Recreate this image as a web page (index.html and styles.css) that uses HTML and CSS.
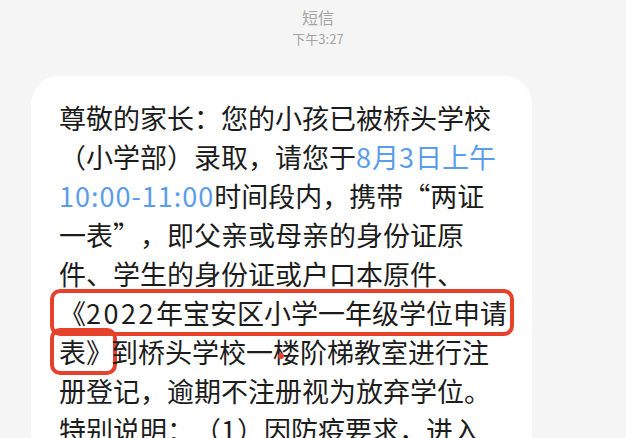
FILE: index.html
```html
<!DOCTYPE html>
<html lang="zh-CN">
<head>
<meta charset="utf-8">
<link rel="stylesheet" href="styles.css">
</head>
<body>
<div class="screen">
  <header class="thread-head">
    <div class="thread-title">短信</div>
    <div class="thread-time">下午3:27</div>
  </header>
  <div class="bubble">
    <p class="msg">尊敬的家长：您的小孩已被桥头学校<br>（小学部）录取，请您于<span class="link"><span class="num">8</span>月<span class="num">3</span>日上午<br><span class="num">10:00-11:00</span></span>时间段内，携带“两证<br>一表”，即父亲或母亲的身份证原<br>件、学生的身份证或户口本原件、<br><span class="mark mark-a">《<span class="num year">2022</span>年宝安区小学一年级学位申请</span><br><span class="mark mark-b">表》</span>到桥头学校一楼阶梯教室进行注<br>册登记，逾期不注册视为放弃学位。<br>特别说明：（<span class="num">1</span>）因防疫要求，进入</p>
    <span class="dot"></span>
  </div>
</div>
</body>
</html>
```
FILE: styles.css
```css
html, body {
  margin: 0;
  padding: 0;
}
body {
  background: #f5f5f5;
  font-family: "Noto Sans CJK SC", "Noto Sans", sans-serif;
  overflow: hidden;
}
.screen {
  width: 626px;
  height: 438px;
  overflow: hidden;
}
.thread-head {
  display: flex;
  flex-direction: column;
  align-items: center;
  padding: 6px 0 0 10px;
  color: #a4a4a4;
}
.thread-title {
  font-size: 16px;
  line-height: 22px;
}
.thread-time {
  font-size: 13px;
  line-height: 21px;
}
.bubble {
  position: relative;
  margin: 27px 0 0 31px;
  width: 501px;
  background: #ffffff;
  border-radius: 28px 28px 0 0;
  padding: 22px 0 40px 28px;
  box-sizing: border-box;
}
.msg {
  margin: 0;
  font-size: 27px;
  line-height: 39px;
  color: #1c1c1c;
  white-space: nowrap;
  text-spacing-trim: space-all;
}
.link {
  color: #5b9de9;
}
.num {
  letter-spacing: 1px;
}
.year {
  letter-spacing: 2.5px;
}
.mark {
  border: 4px solid #e6412b;
  border-radius: 10px;
  margin-left: -9px;
  padding-left: 5px;
}
.mark-a {
  padding-right: 3px;
  margin-right: -7px;
}
.mark-b {
  padding-right: 0;
  margin-right: -6px;
}
.dot {
  position: absolute;
  left: 247px;
  top: 277px;
  width: 6px;
  height: 6px;
  border-radius: 50%;
  background: #e6412b;
}
```
